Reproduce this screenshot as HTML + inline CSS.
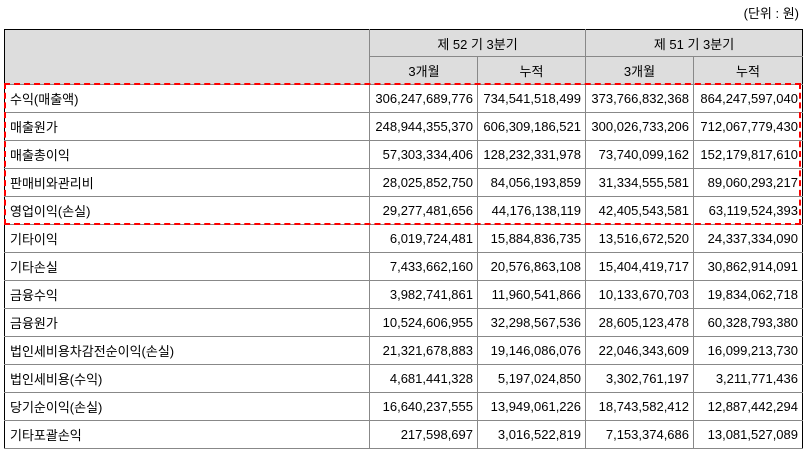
<!DOCTYPE html>
<html><head><meta charset="utf-8"><style>
body{margin:0;background:#fff;width:808px;height:449px;overflow:hidden;position:relative;font-family:"Liberation Sans","Noto Sans CJK KR",sans-serif;font-size:13px;color:#000}
.unit{position:absolute;right:9px;top:3px;font-size:13px}
table{position:absolute;left:4px;top:29px;border-collapse:collapse;table-layout:fixed;width:798px}
td{border:1px solid #888;height:27px;padding:0 4px;white-space:nowrap;overflow:hidden;box-sizing:border-box;text-align:right}
td:first-child{text-align:left;padding-left:5px;border-left:1.5px solid #000}
td:last-child{border-right:1.5px solid #000}
tr:first-child td{border-top:1.5px solid #000}
.h td{background:#ddd;text-align:center}
.box{position:absolute;left:4px;top:83px;width:793px;height:138px;border:2px dashed #f00;pointer-events:none}
</style></head><body>
<div class="unit">(단위 : 원)</div>
<table>
<colgroup><col style="width:365px"><col style="width:108px"><col style="width:108px"><col style="width:108px"><col style="width:109px"></colgroup>
<tr class="h"><td rowspan="2" style="height:55px"></td><td colspan="2">제 52 기 3분기</td><td colspan="2">제 51 기 3분기</td></tr>
<tr class="h"><td style="height:28px">3개월</td><td>누적</td><td>3개월</td><td>누적</td></tr>
<tr><td style="height:28px">수익(매출액)</td><td>306,247,689,776</td><td>734,541,518,499</td><td>373,766,832,368</td><td>864,247,597,040</td></tr>
<tr><td style="height:28px">매출원가</td><td>248,944,355,370</td><td>606,309,186,521</td><td>300,026,733,206</td><td>712,067,779,430</td></tr>
<tr><td style="height:28px">매출총이익</td><td>57,303,334,406</td><td>128,232,331,978</td><td>73,740,099,162</td><td>152,179,817,610</td></tr>
<tr><td style="height:28px">판매비와관리비</td><td>28,025,852,750</td><td>84,056,193,859</td><td>31,334,555,581</td><td>89,060,293,217</td></tr>
<tr><td style="height:28px">영업이익(손실)</td><td>29,277,481,656</td><td>44,176,138,119</td><td>42,405,543,581</td><td>63,119,524,393</td></tr>
<tr><td style="height:28px">기타이익</td><td>6,019,724,481</td><td>15,884,836,735</td><td>13,516,672,520</td><td>24,337,334,090</td></tr>
<tr><td style="height:28px">기타손실</td><td>7,433,662,160</td><td>20,576,863,108</td><td>15,404,419,717</td><td>30,862,914,091</td></tr>
<tr><td style="height:28px">금융수익</td><td>3,982,741,861</td><td>11,960,541,866</td><td>10,133,670,703</td><td>19,834,062,718</td></tr>
<tr><td style="height:28px">금융원가</td><td>10,524,606,955</td><td>32,298,567,536</td><td>28,605,123,478</td><td>60,328,793,380</td></tr>
<tr><td style="height:28px">법인세비용차감전순이익(손실)</td><td>21,321,678,883</td><td>19,146,086,076</td><td>22,046,343,609</td><td>16,099,213,730</td></tr>
<tr><td style="height:28px">법인세비용(수익)</td><td>4,681,441,328</td><td>5,197,024,850</td><td>3,302,761,197</td><td>3,211,771,436</td></tr>
<tr><td style="height:28px">당기순이익(손실)</td><td>16,640,237,555</td><td>13,949,061,226</td><td>18,743,582,412</td><td>12,887,442,294</td></tr>
<tr><td style="height:28px">기타포괄손익</td><td>217,598,697</td><td>3,016,522,819</td><td>7,153,374,686</td><td>13,081,527,089</td></tr>
</table>
<div class="box"></div>
</body></html>
